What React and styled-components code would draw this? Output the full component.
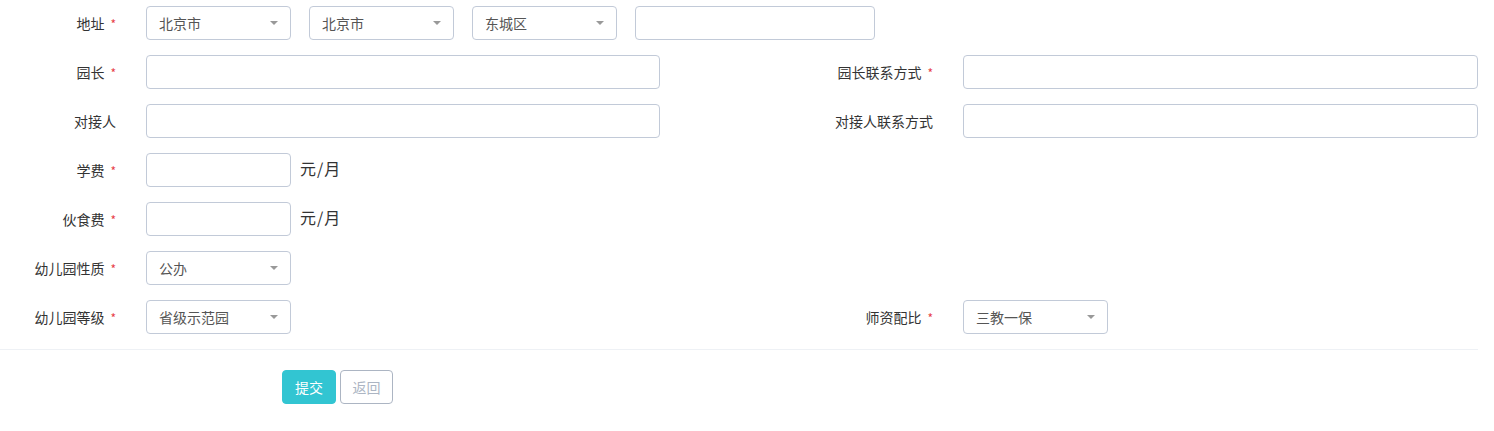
import styled, { createGlobalStyle } from "styled-components";

const GlobalStyle = createGlobalStyle`
  body {
    margin: 0;
    background: #fff;
    font-family: "Noto Sans CJK SC", "Noto Sans", sans-serif;
    font-size: 14px;
    color: #333;
  }
`;

const Page = styled.div`
  width: 1478px;
  padding-top: 6px;
`;

const Row = styled.div`
  display: grid;
  grid-template-columns: 146px 514px 157px 146px 515px;
  align-items: center;
  height: 34px;
  margin-bottom: 15px;
`;

const Label = styled.label`
  justify-self: end;
  padding-right: 30px;
  font-size: 14px;
  line-height: 34px;
  height: 34px;
  color: #333;
  white-space: nowrap;
`;

const Star = styled.span`
  color: #e73d4a;
  font-size: 12px;
  margin-left: 6px;
`;

const Field = styled.div`
  display: flex;
  align-items: center;
  gap: ${(p) => p.$gap || 0}px;
  grid-column: ${(p) => p.$span || "auto"};
`;

const Input = styled.input`
  box-sizing: border-box;
  flex-shrink: 0;
  height: 34px;
  width: ${(p) => (p.$w ? p.$w + "px" : "100%")};
  border: 1px solid #c2cad8;
  border-radius: 4px;
  padding: 6px 12px;
  font: inherit;
  outline: none;
  background: #fff;
`;

const Select = styled.div`
  box-sizing: border-box;
  flex-shrink: 0;
  display: flex;
  align-items: center;
  justify-content: space-between;
  height: 34px;
  width: ${(p) => p.$w || 145}px;
  border: 1px solid #c2cad8;
  border-radius: 4px;
  padding: 0 12px;
  color: #555;
  font-size: 14px;
`;

const Caret = styled.span`
  width: 0;
  height: 0;
  border-left: 4px solid transparent;
  border-right: 4px solid transparent;
  border-top: 4px solid #999;
`;

const Unit = styled.span`
  font-size: 16px;
  letter-spacing: 1px;
  color: #333;
  margin-left: 9px;
  margin-top: -4px;
`;

const Divider = styled.div`
  height: 1px;
  background: #eef1f5;
`;

const Actions = styled.div`
  display: flex;
  gap: 4px;
  padding: 20px 0 0 282px;
`;

const Button = styled.button`
  box-sizing: border-box;
  height: 34px;
  width: ${(p) => (p.$primary ? 54 : 53)}px;
  border-radius: 4px;
  font: inherit;
  font-size: 14px;
  border: 1px solid ${(p) => (p.$primary ? "#32c5d2" : "#acb5c3")};
  background: ${(p) => (p.$primary ? "#32c5d2" : "#fff")};
  color: ${(p) => (p.$primary ? "#fff" : "#acb5c3")};
  padding: 0;
`;

const Sel = ({ value, w }) => (
  <Select $w={w}>
    <span>{value}</span>
    <Caret />
  </Select>
);

const Lbl = ({ text, req }) => (
  <Label>
    {text}
    {req && <Star>*</Star>}
  </Label>
);

export default function App() {
  return (
    <>
      <GlobalStyle />
      <Page>
        <Row>
          <Lbl text="地址" req />
          <Field $gap={18} $span="2 / -1">
            <Sel value="北京市" />
            <Sel value="北京市" />
            <Sel value="东城区" />
            <Input $w={240} />
          </Field>
        </Row>
        <Row>
          <Lbl text="园长" req />
          <Input />
          <span />
          <Lbl text="园长联系方式" req />
          <Input />
        </Row>
        <Row>
          <Lbl text="对接人" />
          <Input />
          <span />
          <Lbl text="对接人联系方式" />
          <Input />
        </Row>
        <Row>
          <Lbl text="学费" req />
          <Field>
            <Input $w={145} />
            <Unit>元/月</Unit>
          </Field>
        </Row>
        <Row>
          <Lbl text="伙食费" req />
          <Field>
            <Input $w={145} />
            <Unit>元/月</Unit>
          </Field>
        </Row>
        <Row>
          <Lbl text="幼儿园性质" req />
          <Field>
            <Sel value="公办" />
          </Field>
        </Row>
        <Row>
          <Lbl text="幼儿园等级" req />
          <Field>
            <Sel value="省级示范园" />
          </Field>
          <span />
          <Lbl text="师资配比" req />
          <Field>
            <Sel value="三教一保" />
          </Field>
        </Row>
        <Divider />
        <Actions>
          <Button $primary>提交</Button>
          <Button>返回</Button>
        </Actions>
      </Page>
    </>
  );
}
